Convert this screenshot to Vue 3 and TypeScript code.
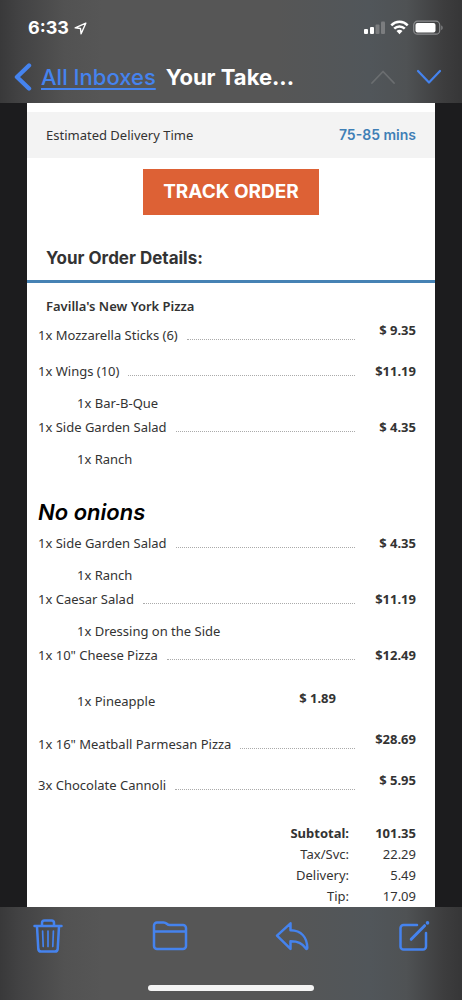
<script setup lang="ts">
interface Row {
  kind: 'solo' | 'item' | 'option' | 'priced' | 'note'
  text: string
  price?: string
}

interface Total {
  label: string
  amount: string
  strong?: boolean
}

const rows: Row[] = [
  { kind: 'solo', text: '1x Mozzarella Sticks (6)', price: '$ 9.35' },
  { kind: 'item', text: '1x Wings (10)', price: '$11.19' },
  { kind: 'option', text: '1x Bar-B-Que' },
  { kind: 'item', text: '1x Side Garden Salad', price: '$ 4.35' },
  { kind: 'option', text: '1x Ranch' },
  { kind: 'note', text: 'No onions' },
  { kind: 'item', text: '1x Side Garden Salad', price: '$ 4.35' },
  { kind: 'option', text: '1x Ranch' },
  { kind: 'item', text: '1x Caesar Salad', price: '$11.19' },
  { kind: 'option', text: '1x Dressing on the Side' },
  { kind: 'item', text: '1x 10" Cheese Pizza', price: '$12.49' },
  { kind: 'priced', text: '1x Pineapple', price: '$ 1.89' },
  { kind: 'solo', text: '1x 16" Meatball Parmesan Pizza', price: '$28.69' },
  { kind: 'solo', text: '3x Chocolate Cannoli', price: '$ 5.95' },
]

const totals: Total[] = [
  { label: 'Subtotal:', amount: '101.35', strong: true },
  { label: 'Tax/Svc:', amount: '22.29' },
  { label: 'Delivery:', amount: '5.49' },
  { label: 'Tip:', amount: '17.09' },
]
</script>

<template>
  <div class="screen">
    <header class="top">
      <div class="status">
        <span class="clock">6:33</span>
        <svg class="location" width="13" height="13" viewBox="0 0 13 13" aria-hidden="true">
          <path d="M11.8 1.2 1.2 5.9 6.5 6.5 7.1 11.8Z" fill="none" stroke="#fff" stroke-width="1.4" stroke-linejoin="round" />
        </svg>
        <span class="spacer"></span>
        <svg width="80" height="16" viewBox="0 0 80 16" aria-hidden="true">
          <rect x="0" y="9" width="4" height="5" rx="1" fill="#fff" />
          <rect x="6" y="7" width="4" height="7" rx="1" fill="#fff" />
          <rect x="11.5" y="4.500" width="4" height="9.500" rx="1" fill="#7b7d7f" />
          <rect x="17" y="1.500" width="4" height="12.500" rx="1" fill="#7b7d7f" />
          <g fill="none" stroke="#fff" stroke-width="2.500">
            <path d="M27.300 5.300a11.500 11.500 0 0 1 16.400 0" />
            <path d="M30.200 8.600a7.500 7.500 0 0 1 10.600 0" />
          </g>
          <path d="M32.500 11.100a4.300 4.300 0 0 1 6 0L35.500 14.200Z" fill="#fff" />
          <rect x="49.700" y="1.200" width="26" height="13" rx="3.800" fill="none" stroke="#8b8c8e" stroke-width="1.200" />
          <rect x="51.500" y="3" width="20" height="9.500" rx="2" fill="#fff" />
          <path d="M77.300 5.500v4.500c1.700-.6 1.700-3.900 0-4.500Z" fill="#8b8c8e" />
        </svg>
      </div>
      <nav class="bar">
        <a class="back" href="#inboxes">
          <svg width="18" height="28" viewBox="0 0 18 28" aria-hidden="true">
            <path d="M15 2.500 3 14l12 11.500" fill="none" stroke="#4583ee" stroke-width="4.400" stroke-linecap="round" stroke-linejoin="round" />
          </svg>
          <span class="back-label">All Inboxes</span>
        </a>
        <h1 class="subject">Your Take...</h1>
        <button class="step" type="button" aria-label="Previous message" disabled>
          <svg width="26" height="16" viewBox="0 0 26 16" aria-hidden="true">
            <path d="M2 14 13 2.500 24 14" fill="none" stroke="#6b6e70" stroke-width="1.800" stroke-linecap="round" stroke-linejoin="round" />
          </svg>
        </button>
        <button class="step" type="button" aria-label="Next message">
          <svg width="26" height="16" viewBox="0 0 26 16" aria-hidden="true">
            <path d="M2 2 13 13.500 24 2" fill="none" stroke="#4583ee" stroke-width="2.200" stroke-linecap="round" stroke-linejoin="round" />
          </svg>
        </button>
      </nav>
    </header>

    <main class="mail">
      <article class="sheet">
        <div class="eta">
          <span>Estimated Delivery Time</span>
          <strong class="eta-time">75-85 mins</strong>
        </div>
        <button class="track" type="button">TRACK ORDER</button>
        <h2 class="heading">Your Order Details:</h2>
        <h3 class="shop">Favilla's New York Pizza</h3>
        <table class="order">
          <tbody>
            <tr v-for="(row, i) in rows" :key="i" :class="row.kind">
              <td v-if="row.kind === 'note'" colspan="2">{{ row.text }}</td>
              <template v-else-if="row.kind === 'priced'">
                <td>
                  <div class="line">
                    <span>{{ row.text }}</span>
                    <span class="inner-price">{{ row.price }}</span>
                  </div>
                </td>
                <td></td>
              </template>
              <template v-else-if="row.kind === 'option'">
                <td>{{ row.text }}</td>
                <td></td>
              </template>
              <template v-else>
                <td>
                  <div class="line">
                    <span>{{ row.text }}</span>
                    <span class="dots"></span>
                  </div>
                </td>
                <td class="price">{{ row.price }}</td>
              </template>
            </tr>
          </tbody>
          <tfoot>
            <tr v-for="t in totals" :key="t.label" class="total" :class="{ strong: t.strong }">
              <th scope="row">{{ t.label }}</th>
              <td>{{ t.amount }}</td>
            </tr>
          </tfoot>
        </table>
      </article>
    </main>

    <footer class="bottom">
      <div class="tools">
        <button class="tool" type="button" aria-label="Delete">
          <svg width="32" height="36" viewBox="0 0 32 36" aria-hidden="true">
            <g fill="none" stroke="#4583ee" stroke-width="2.500" stroke-linecap="round" stroke-linejoin="round">
              <path d="M2.500 8h27" />
              <path d="M10 7.500V5a2.500 2.500 0 0 1 2.500-2.500h7A2.500 2.500 0 0 1 22 5v2.500" />
              <path d="M5 8.500 6.300 31a2.800 2.800 0 0 0 2.800 2.500h13.800a2.800 2.800 0 0 0 2.800-2.500L27 8.500" />
              <path d="M10.600 13l.6 15.500M16 13v15.500M21.400 13l-.6 15.500" stroke-width="1.700" />
            </g>
          </svg>
        </button>
        <button class="tool" type="button" aria-label="Move to folder">
          <svg width="36" height="30" viewBox="0 0 36 30" aria-hidden="true">
            <path d="M2 25V4.500A3 3 0 0 1 5 1.500h6.500c1.500 0 2.300.4 3.300 1.300s1.800 1.200 3 1.200H31a3 3 0 0 1 3 3V25a3 3 0 0 1-3 3H5a3 3 0 0 1-3-3ZM2 10.500h32" fill="none" stroke="#4583ee" stroke-width="2.500" stroke-linejoin="round" />
          </svg>
        </button>
        <button class="tool" type="button" aria-label="Reply">
          <svg width="34" height="30" viewBox="0 0 34 30" aria-hidden="true">
            <path d="M15.500 2.300 2 14.600 15.500 27.900V20.300c7.500 0 11.500 1.600 15.300 7.100.7.800 1.500.6 1.500-.6C32 16.500 26.500 9.500 15.500 9.300Z" fill="none" stroke="#4583ee" stroke-width="2.500" stroke-linejoin="round" />
          </svg>
        </button>
        <button class="tool" type="button" aria-label="Compose">
          <svg width="32" height="32" viewBox="0 0 32 32" aria-hidden="true">
            <g fill="none" stroke="#4583ee" stroke-width="2.500" stroke-linecap="round" stroke-linejoin="round">
              <path d="M19 5H5.500A3 3 0 0 0 2.500 8v18.500a3 3 0 0 0 3 3h19.500a3 3 0 0 0 3-3V13" />
              <path d="M13.200 19.300 26.600 5.700" stroke-width="3" />
              <path d="M29.500 2.900v.01" stroke-width="3.600" />
            </g>
          </svg>
        </button>
      </div>
      <div class="home"></div>
    </footer>
  </div>
</template>

<style>
body {
  margin: 0;
  background: #1c1c1e;
}
</style>

<style scoped>
.screen {
  min-height: 100vh;
  display: flex;
  flex-direction: column;
  background: #1c1c1e;
  color: #333;
  font-family: "Noto Sans", "Open Sans", sans-serif;
  font-size: 13px;
  line-height: 20px;
}

button {
  margin: 0;
  padding: 0;
  border: 0;
  background: none;
  font: inherit;
}

svg {
  display: block;
}

.top,
.bottom {
  box-sizing: border-box;
  background: linear-gradient(90deg, #39393a 0, #424243 4%, #525252 14%, #565656 22%, #565656 60%, #51565a 80%, #4f5254 88%, #3d3d3e 96%, #363637 100%);
  font-family: Inter, "Liberation Sans", sans-serif;
}

.top {
  height: 103px;
  padding-top: 16px;
}

.status {
  display: flex;
  align-items: center;
  gap: 5px;
  height: 24px;
  padding: 0 18px 0 28px;
  color: #fff;
}

.clock {
  font-size: 18px;
  font-weight: 700;
}

.spacer {
  flex: 1;
}

.bar {
  display: flex;
  align-items: center;
  height: 36px;
  margin-top: 19px;
  padding: 0 20px 0 14px;
}

.back {
  display: flex;
  align-items: center;
  gap: 9px;
  color: #4583ee;
  text-decoration: none;
}

.back-label {
  font-size: 22px;
  font-weight: 500;
  line-height: 28px;
  text-decoration: underline;
  text-decoration-thickness: 2px;
  text-underline-offset: 3px;
}

.subject {
  flex: 1;
  margin: 0 0 0 10px;
  color: #fff;
  font-size: 22px;
  font-weight: 700;
  line-height: 28px;
  white-space: nowrap;
}

.step + .step {
  margin-left: 20px;
}

.mail {
  flex: 1;
  display: flex;
  padding: 0 27px;
}

.sheet {
  flex: 1;
  min-width: 0;
  padding-top: 9px;
  background: #fff;
}

.eta {
  display: flex;
  justify-content: space-between;
  align-items: center;
  height: 46px;
  padding: 0 19px;
  background: #f3f3f3;
}

.eta-time {
  color: #3f7fb6;
  font-family: Inter, sans-serif;
  font-size: 14px;
  font-weight: 600;
}

.track {
  display: block;
  height: 46px;
  margin: 11px auto 0;
  padding: 0 20px;
  background: #dd6135;
  color: #fff;
  font-family: Inter, sans-serif;
  font-size: 19px;
  font-weight: 700;
}

.heading {
  margin: 31px 0 0;
  padding: 0 19px 10px;
  border-bottom: 3px solid #4682b4;
  font-family: Inter, sans-serif;
  font-size: 17px;
  font-weight: 700;
  line-height: 24px;
}

.shop {
  margin: 0;
  padding: 13px 19px 0;
  font-size: 13px;
  font-weight: 600;
  line-height: 20px;
}

.order {
  width: 100%;
  border-collapse: collapse;
}

.order td,
.order th {
  padding: 0;
  vertical-align: top;
}

.line {
  display: flex;
  gap: 9px;
}

.dots {
  flex: 1;
  height: 14px;
  border-bottom: 1px dotted #aaa;
}

.order .price {
  width: 80px;
  padding-right: 19px;
  box-sizing: border-box;
  text-align: right;
  font-weight: 700;
}

.order .solo td {
  padding: 9px 0 12px 11px;
}

.order .solo .price {
  padding: 4px 19px 0 0;
}

.order .item td {
  padding: 4px 0 7px 11px;
}

.order .item .price {
  padding-right: 19px;
}

.order .option td {
  padding: 5px 0 0 50px;
}

.order .priced td {
  padding: 19px 19px 14px 50px;
}

.priced .line {
  justify-content: space-between;
}

.inner-price {
  margin-top: -3px;
  font-weight: 700;
}

.order .note td {
  padding: 27px 0 1px 11px;
  color: #000;
  font-family: Inter, sans-serif;
  font-size: 22px;
  font-style: italic;
  font-weight: 600;
  line-height: 32px;
}

.order .total th,
.order .total td {
  height: 21px;
  line-height: 21px;
  font-weight: 400;
  text-align: right;
}

.order .total th {
  padding-right: 6px;
}

.order .total td {
  padding-right: 19px;
}

.order .strong th,
.order .strong td {
  padding-top: 16px;
  font-weight: 700;
}

.bottom {
  display: flex;
  flex-direction: column;
  align-items: center;
  justify-content: space-between;
  height: 93px;
  padding: 8px 0 9px;
}

.tools {
  display: flex;
  justify-content: space-between;
  align-self: stretch;
  padding: 0 26px;
}

.tool {
  display: flex;
  align-items: center;
  justify-content: center;
  width: 44px;
  height: 42px;
}

.home {
  width: 36%;
  height: 6px;
  border-radius: 3px;
  background: #f4f4f4;
}
</style>
